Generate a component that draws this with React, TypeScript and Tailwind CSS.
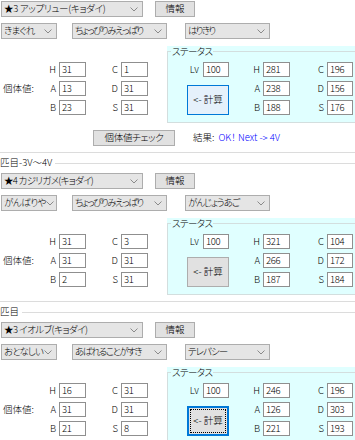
import React from "react";
import clsx from "clsx";

type SecData = {
  title?: string;
  poke: [string, string];
  nature: [string, string];
  chara: [string, string];
  ability: [string, string];
  iv: { h: string; c: string; a: string; d: string; b: string; s: string };
  st: { lv: string; h: string; c: string; a: string; d: string; b: string; s: string };
  calc: "hover" | "normal" | "focus";
  check?: boolean;
};

const sections: SecData[] = [
  {
    poke: ["★3 アップリュー(キョダイ)", "tracking-[-0.3px]"],
    nature: ["きまぐれ", "tracking-[-0.9px]"],
    chara: ["ちょっぴりみえっぱり", "tracking-[-1.5px]"],
    ability: ["はりきり", "tracking-[-1.8px]"],
    iv: { h: "31", c: "1", a: "13", d: "31", b: "23", s: "31" },
    st: { lv: "100", h: "281", c: "196", a: "238", d: "156", b: "188", s: "176" },
    calc: "hover",
    check: true,
  },
  {
    title: "匹目-3V～4V",
    poke: ["★4 カジリガメ(キョダイ)", "tracking-[-0.7px]"],
    nature: ["がんばりや", "tracking-[-0.5px]"],
    chara: ["ちょっぴりみえっぱり", "tracking-[-1.5px]"],
    ability: ["がんじょうあご", "tracking-[-1.1px]"],
    iv: { h: "31", c: "3", a: "31", d: "31", b: "2", s: "31" },
    st: { lv: "100", h: "321", c: "104", a: "266", d: "172", b: "187", s: "184" },
    calc: "normal",
  },
  {
    title: "匹目",
    poke: ["★3 イオルブ(キョダイ)", "tracking-[-0.5px]"],
    nature: ["おとなしい", "tracking-[-0.9px]"],
    chara: ["あばれることがすき", "tracking-[-1.5px]"],
    ability: ["テレパシー", "tracking-[-1px]"],
    iv: { h: "16", c: "31", a: "31", d: "31", b: "21", s: "8" },
    st: { lv: "100", h: "246", c: "196", a: "126", d: "303", b: "221", s: "193" },
    calc: "focus",
  },
];

function Chevron() {
  return (
    <svg width="8" height="5" viewBox="0 0 8 5" className="shrink-0">
      <path d="M0.5 0.5 L4 4 L7.5 0.5" fill="none" stroke="#8a8a8a" strokeWidth="1" />
    </svg>
  );
}

function Combo({ className, t }: { className: string; t: [string, string] }) {
  return (
    <div
      className={clsx(
        "flex h-[16px] shrink-0 items-center justify-between border border-[#adadad] bg-[#e5e5e5] pl-[2px] pr-[4px]",
        className
      )}
    >
      <span className={clsx("whitespace-nowrap leading-none", t[1])}>{t[0]}</span>
      <Chevron />
    </div>
  );
}

function Btn({ className, children }: { className: string; children: React.ReactNode }) {
  return (
    <div
      className={clsx(
        "flex h-[16px] shrink-0 items-center justify-center border border-[#adadad] bg-[#e1e1e1] leading-none",
        className
      )}
    >
      {children}
    </div>
  );
}

function TB({ v, className }: { v: string; className?: string }) {
  return (
    <div
      className={clsx(
        "flex h-[15px] items-center border border-[#8f8f8f] bg-white pl-[2px] leading-none tracking-[-0.3px]",
        className ?? "w-[27px]"
      )}
    >
      {v}
    </div>
  );
}

function Lbl({ children }: { children: React.ReactNode }) {
  return <div className="flex items-center justify-end pr-[3px] leading-none">{children}</div>;
}

function Section({ d }: { d: SecData }) {
  const calcCls =
    d.calc === "hover"
      ? "border border-[#0078d7] bg-[#e5f1fb]"
      : d.calc === "normal"
      ? "border border-[#adadad] bg-[#e1e1e1]"
      : "border-2 border-[#0078d7] bg-[#e1e1e1] outline-1 outline-dotted outline-black outline-offset-[-4px]";
  return (
    <div className="flex flex-col">
      {d.title && (
        <div className="mt-[4px] flex h-[12px] items-center">
          <span className="whitespace-nowrap leading-none">{d.title}</span>
          <div className="ml-[3px] h-px flex-1 bg-[#dcdcdc]" />
        </div>
      )}
      <div className={clsx("flex", d.title ? "mt-[4px]" : "mt-[1px]")}>
        <Combo className="ml-[1px] w-[142px]" t={d.poke} />
        <Btn className="ml-[12px] w-[40px]">情報</Btn>
      </div>
      <div className="mt-[6px] flex">
        <Combo className="ml-[1px] w-[56px]" t={d.nature} />
        <Combo className="ml-[15px] w-[95px]" t={d.chara} />
        <Combo className="ml-[18px] w-[85px]" t={d.ability} />
      </div>
      <div className="mt-[7px] flex h-[77px]">
        <div className="w-[167px] shrink-0 pl-[3px] pt-[16px]">
          <div className="grid grid-cols-[30px_26px_27px_35px_27px] grid-rows-[15px_15px_15px] gap-y-[4px]">
            <div />
            <Lbl>H</Lbl>
            <TB v={d.iv.h} />
            <Lbl>C</Lbl>
            <TB v={d.iv.c} />
            <div className="flex items-center whitespace-nowrap leading-none">個体値:</div>
            <Lbl>A</Lbl>
            <TB v={d.iv.a} />
            <Lbl>D</Lbl>
            <TB v={d.iv.d} />
            <div />
            <Lbl>B</Lbl>
            <TB v={d.iv.b} />
            <Lbl>S</Lbl>
            <TB v={d.iv.s} />
          </div>
        </div>
        <div className="w-[200px] shrink-0 bg-[#e0ffff]">
          <fieldset className="h-full border border-[#d3dede] px-0">
            <legend className="ml-[3px] px-[1px] leading-[11px] tracking-[-0.6px]">ステータス</legend>
            <div className="ml-[19px] mt-[5px] grid grid-cols-[42px_34px_27px_37px_26px] grid-rows-[15px_15px_15px] gap-y-[4px]">
              <div className="flex items-center justify-end">
                <span className="mr-[4px] leading-none">Lv</span>
                <TB v={d.st.lv} className="w-[26px]" />
              </div>
              <Lbl>H</Lbl>
              <TB v={d.st.h} />
              <Lbl>C</Lbl>
              <TB v={d.st.c} className="w-[26px]" />
              <div
                className={clsx(
                  "row-span-2 flex h-[30px] items-center justify-center self-end leading-none",
                  calcCls
                )}
              >
                &lt;- 計算
              </div>
              <Lbl>A</Lbl>
              <TB v={d.st.a} />
              <Lbl>D</Lbl>
              <TB v={d.st.d} className="w-[26px]" />
              <Lbl>B</Lbl>
              <TB v={d.st.b} />
              <Lbl>S</Lbl>
              <TB v={d.st.s} className="w-[26px]" />
            </div>
          </fieldset>
        </div>
      </div>
      {d.check && (
        <div className="mt-[7px] flex items-center">
          <Btn className="ml-[93px] w-[82px] tracking-[-0.3px]">個体値チェック</Btn>
          <span className="ml-[18px] whitespace-nowrap leading-none">結果:</span>
          <span className="ml-[4px] whitespace-nowrap leading-none text-[#0000ff]">OK！ Next -&gt; 4V</span>
        </div>
      )}
      {d.title !== "匹目" && <div className="mt-[6px] h-px bg-[#dcdcdc]" />}
    </div>
  );
}

export default function App() {
  return (
    <div className="h-[440px] w-[355px] overflow-hidden bg-white font-['Noto_Sans_CJK_JP',sans-serif] text-[9.5px] font-light text-black [font-feature-settings:'palt']">
      {sections.map((s, i) => (
        <Section key={i} d={s} />
      ))}
    </div>
  );
}
